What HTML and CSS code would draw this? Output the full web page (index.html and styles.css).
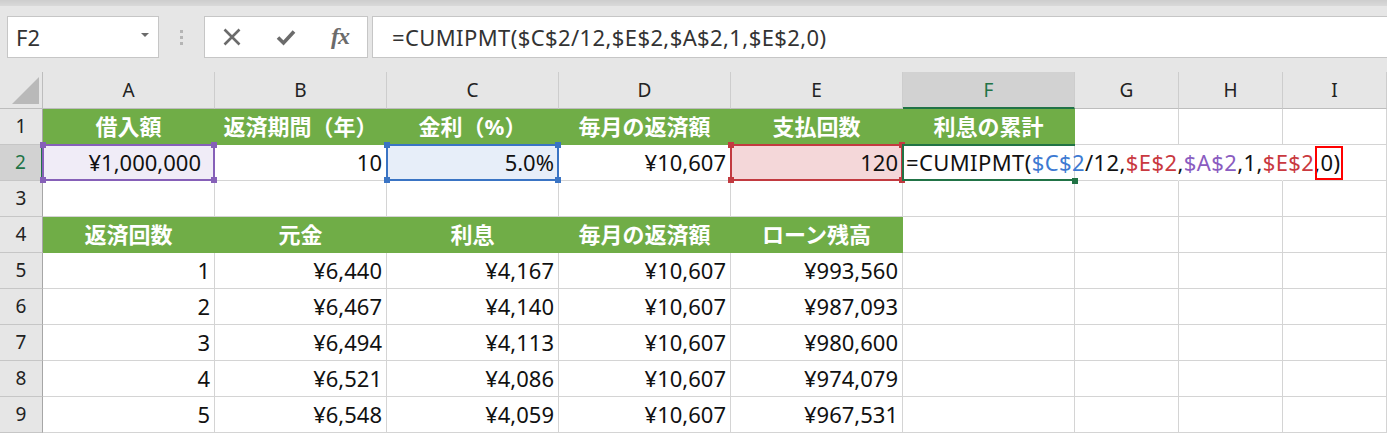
FILE: index.html
```html
<!DOCTYPE html>
<html lang="ja">
<head>
<meta charset="utf-8">
<title>CUMIPMT</title>
<link rel="stylesheet" href="styles.css">
</head>
<body>
<div class="app">
  <div class="topstrip"></div>
  <div class="toolbar">
    <div class="namebox"><span class="name">F2</span><span class="dd"></span></div>
    <div class="grip"><i></i><i></i><i></i></div>
    <div class="btns">
      <span class="btn"><svg width="20" height="18" viewBox="0 0 20 18"><path d="M2.5 1.5 L17.5 16.5 M17.5 1.5 L2.5 16.5" stroke="#6b6b6b" stroke-width="2.6" fill="none"/></svg></span>
      <span class="btn"><svg width="20" height="18" viewBox="0 0 20 18"><path d="M2 9.5 L7.5 15 L18 3.5" stroke="#6b6b6b" stroke-width="3.6" fill="none" stroke-linejoin="miter"/></svg></span>
      <span class="btn fx">fx</span>
    </div>
    <div class="fbar">=CUMIPMT($C$2/12,$E$2,$A$2,1,$E$2,0)</div>
  </div>
  <div class="sheet">
    <div class="c ch corner"><svg width="42" height="36" viewBox="0 0 42 36"><polygon points="12,32 39,32 39,5" fill="#b9b9b9"/></svg></div>
    <div class="c ch">A</div>
    <div class="c ch">B</div>
    <div class="c ch">C</div>
    <div class="c ch">D</div>
    <div class="c ch">E</div>
    <div class="c ch on">F</div>
    <div class="c ch">G</div>
    <div class="c ch">H</div>
    <div class="c ch">I</div>

    <div class="c rh">1</div>
    <div class="c g">借入額</div>
    <div class="c g">返済期間（年）</div>
    <div class="c g">金利（%）</div>
    <div class="c g">毎月の返済額</div>
    <div class="c g">支払回数</div>
    <div class="c g">利息の累計</div>
    <div class="c"></div>
    <div class="c"></div>
    <div class="c"></div>

    <div class="c rh on">2</div>
    <div class="c r ref purple wide">¥1,000,000</div>
    <div class="c r">10</div>
    <div class="c r ref blue">5.0%</div>
    <div class="c r">¥10,607</div>
    <div class="c r ref red">120</div>
    <div class="c active">=CUMIPMT(<span class="kb">$C$2</span>/12,<span class="kr">$E$2</span>,<span class="kp">$A$2</span>,1,<span class="kr">$E$2</span><span class="mark">,0)</span></div>
    <div class="c noright"></div>
    <div class="c noright"></div>
    <div class="c"></div>

    <div class="c rh">3</div>
    <div class="c"></div>
    <div class="c"></div>
    <div class="c"></div>
    <div class="c"></div>
    <div class="c"></div>
    <div class="c"></div>
    <div class="c"></div>
    <div class="c"></div>
    <div class="c"></div>

    <div class="c rh">4</div>
    <div class="c g">返済回数</div>
    <div class="c g">元金</div>
    <div class="c g">利息</div>
    <div class="c g">毎月の返済額</div>
    <div class="c g">ローン残高</div>
    <div class="c"></div>
    <div class="c"></div>
    <div class="c"></div>
    <div class="c"></div>

    <div class="c rh">5</div>
    <div class="c r">1</div>
    <div class="c r">¥6,440</div>
    <div class="c r">¥4,167</div>
    <div class="c r">¥10,607</div>
    <div class="c r">¥993,560</div>
    <div class="c"></div>
    <div class="c"></div>
    <div class="c"></div>
    <div class="c"></div>

    <div class="c rh">6</div>
    <div class="c r">2</div>
    <div class="c r">¥6,467</div>
    <div class="c r">¥4,140</div>
    <div class="c r">¥10,607</div>
    <div class="c r">¥987,093</div>
    <div class="c"></div>
    <div class="c"></div>
    <div class="c"></div>
    <div class="c"></div>

    <div class="c rh">7</div>
    <div class="c r">3</div>
    <div class="c r">¥6,494</div>
    <div class="c r">¥4,113</div>
    <div class="c r">¥10,607</div>
    <div class="c r">¥980,600</div>
    <div class="c"></div>
    <div class="c"></div>
    <div class="c"></div>
    <div class="c"></div>

    <div class="c rh">8</div>
    <div class="c r">4</div>
    <div class="c r">¥6,521</div>
    <div class="c r">¥4,086</div>
    <div class="c r">¥10,607</div>
    <div class="c r">¥974,079</div>
    <div class="c"></div>
    <div class="c"></div>
    <div class="c"></div>
    <div class="c"></div>

    <div class="c rh">9</div>
    <div class="c r">5</div>
    <div class="c r">¥6,548</div>
    <div class="c r">¥4,059</div>
    <div class="c r">¥10,607</div>
    <div class="c r">¥967,531</div>
    <div class="c"></div>
    <div class="c"></div>
    <div class="c"></div>
    <div class="c"></div>
  </div>
</div>
</body>
</html>
```

FILE: styles.css
```css
* { box-sizing: border-box; margin: 0; padding: 0; }
html, body { width: 1387px; height: 433px; overflow: hidden; }
body {
  background: #e6e6e6;
  font-family: "Noto Sans", "Noto Sans CJK JP", sans-serif;
  color: #111;
}

.topstrip { height: 6px; background: linear-gradient(#cdcdcd, #d9d9d9); }

.toolbar {
  height: 66px;
  display: flex;
  align-items: flex-start;
  padding-top: 10px;
  padding-left: 7px;
}
.namebox {
  width: 152px;
  height: 42px;
  background: #fff;
  border: 1px solid #c6c6c6;
  display: flex;
  align-items: center;
  justify-content: space-between;
  padding: 0 9px 0 8px;
}
.name { font-size: 22px; color: #333; line-height: 1; }
.dd {
  width: 0; height: 0;
  border-left: 4px solid transparent;
  border-right: 4px solid transparent;
  border-top: 4px solid #6b6b6b;
  margin-top: -4px;
}
.grip {
  width: 45px;
  height: 42px;
  display: flex;
  flex-direction: column;
  align-items: center;
  justify-content: center;
  gap: 3px;
}
.grip i { display: block; width: 3px; height: 3px; background: #b5b5b5; }
.btns {
  width: 164px;
  height: 42px;
  background: #fff;
  border: 1px solid #c6c6c6;
  display: flex;
}
.btn { width: 54px; display: flex; align-items: center; justify-content: center; }
.fx {
  font-family: "Liberation Serif", serif;
  font-style: italic;
  font-weight: bold;
  font-size: 24px;
  color: #6b6b6b;
  letter-spacing: -1px;
  padding-bottom: 2px;
}
.fbar {
  flex: 1;
  margin-left: 4px;
  margin-right: -2px;
  height: 42px;
  background: #fff;
  border: 1px solid #c6c6c6;
  font-size: 22px;
  color: #333;
  padding-left: 19px;
  line-height: 40px;
  white-space: nowrap;
  letter-spacing: 0.4px;
}

.sheet {
  display: grid;
  grid-template-columns: 43px repeat(6, 172px) repeat(3, 104px);
  grid-template-rows: 37px repeat(9, 36px);
  background: #fff;
}
.c {
  border-right: 1px solid #d4d4d4;
  border-bottom: 1px solid #d4d4d4;
  background: #fff;
  font-size: 22px;
  line-height: 35px;
  white-space: nowrap;
  padding: 0 4px;
}
.r { text-align: right; }
.ch {
  background: #e6e6e6;
  border-right-color: #cdcdcd;
  border-bottom-color: #bdbdbd;
  font-size: 19px;
  line-height: 36px;
  text-align: center;
  color: #222;
}
.corner { padding: 0; border-right-color: #bdbdbd; }
.corner svg { display: block; }
.ch.on { background: #d2d2d2; color: #217346; border-bottom: 2px solid #217346; }
.rh {
  background: #e6e6e6;
  border-right-color: #a6a6a6;
  border-bottom-color: #c6c6c6;
  font-size: 19px;
  text-align: center;
  color: #222;
  padding: 0;
}
.rh.on { background: #d2d2d2; color: #217346; border-right: 2px solid #217346; }
.g {
  background: #70ad47;
  border-color: #70ad47;
  color: #fff;
  font-weight: bold;
  text-align: center;
}

.ref { position: relative; z-index: 2; }
.ref::before {
  content: "";
  position: absolute;
  top: -1px; left: -1px; right: -1px; bottom: -1px;
  border: 2px solid var(--rc);
}
.ref::after {
  content: "";
  position: absolute;
  top: -3px; left: -3px; right: -3px; bottom: -3px;
  background:
    linear-gradient(var(--rc), var(--rc)) left top / 6px 6px no-repeat,
    linear-gradient(var(--rc), var(--rc)) right top / 6px 6px no-repeat,
    linear-gradient(var(--rc), var(--rc)) left bottom / 6px 6px no-repeat,
    linear-gradient(var(--rc), var(--rc)) right bottom / 6px 6px no-repeat;
}
.purple { --rc: #8660b8; background: #f0ecf7; }
.blue { --rc: #3a74c4; background: #e7eef9; }
.red { --rc: #c23a40; background: #f4d7d9; }
.wide { padding-right: 13px; }

.active {
  position: relative;
  z-index: 3;
  overflow: visible;
  padding-left: 3px;
  letter-spacing: 0.4px;
}
.active::before {
  content: "";
  position: absolute;
  top: -1px; left: -1px; right: -1px; bottom: -1px;
  border: 2px solid #217346;
  border-right: none;
}
.active::after {
  content: "";
  position: absolute;
  right: -4px; bottom: -4px;
  width: 6px; height: 6px;
  background: #217346;
}
.kb { color: #3d7ad2; }
.kr { color: #c9393f; }
.kp { color: #8a5cc0; }
.mark { position: relative; }
.mark::after {
  content: "";
  position: absolute;
  left: 1px; right: -2px;
  top: -1px; bottom: -3px;
  border: 2px solid #ff0000;
}
.noright { border-right-color: #fff; }
```
